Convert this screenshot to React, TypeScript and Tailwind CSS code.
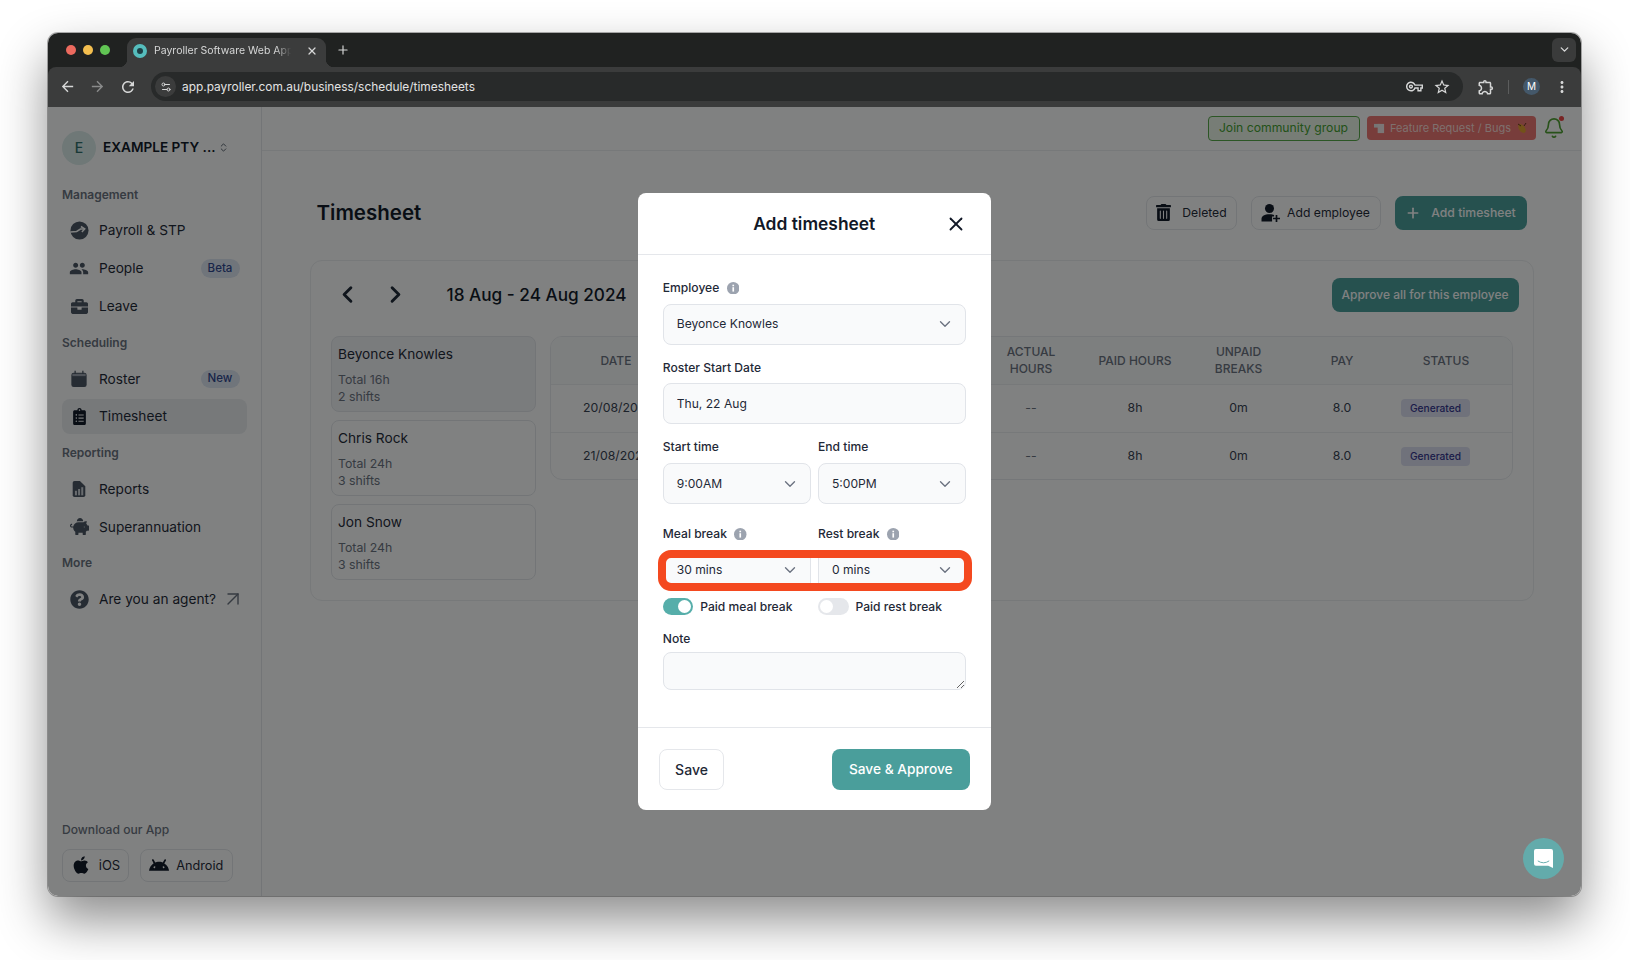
import { ReactNode } from "react";
import {
  ArrowUpRight,
  ChevronDown,
  ChevronLeft,
  ChevronRight,
  ChevronsUpDown,
  Plus,
  Settings2,
  X,
  Bell,
} from "lucide-react";
import {
  MdArrowBack,
  MdArrowForward,
  MdMoreVert,
  MdOutlineExtension,
  MdOutlineVpnKey,
  MdPeople,
  MdRefresh,
  MdStarBorder,
} from "react-icons/md";
import {
  FaApple,
  FaBriefcase,
  FaClipboardList,
  FaPiggyBank,
  FaQuestionCircle,
  FaTrashAlt,
} from "react-icons/fa";
import { SiAndroid } from "react-icons/si";

function PayrollIcon() {
  return (
    <svg viewBox="0 0 20 20" className="w-[19px] h-[19px]">
      <circle cx="10" cy="10" r="9.5" fill="#4b5563" />
      <path d="M0.5 11.5 L7 11 L11 8.5 L15 8.5" stroke="#fff" strokeWidth="1.6" fill="none" />
      <path d="M11.5 5.8 L15.5 8.4 L12.5 11.5" stroke="#fff" strokeWidth="1.6" fill="none" />
    </svg>
  );
}

function CalendarIcon() {
  return (
    <svg viewBox="0 0 20 20" className="w-[18px] h-[18px]">
      <rect x="1.5" y="3" width="17" height="16" rx="2.5" fill="#4b5563" />
      <rect x="2.6" y="4.2" width="14.8" height="2.6" fill="#9ca3af" />
      <rect x="5" y="0.8" width="1.4" height="3.6" fill="#4b5563" />
      <rect x="13.6" y="0.8" width="1.4" height="3.6" fill="#4b5563" />
    </svg>
  );
}

function ReportIcon() {
  return (
    <svg viewBox="0 0 20 20" className="w-[18px] h-[18px]">
      <path d="M3 3 a2 2 0 0 1 2-2 h6 l6 6 v10 a2 2 0 0 1-2 2 h-10 a2 2 0 0 1-2-2z" fill="#4b5563" />
      <rect x="5.5" y="12" width="2.2" height="5" fill="#d1d5db" />
      <rect x="9" y="10" width="2.2" height="7" fill="#d1d5db" />
      <rect x="12.5" y="8" width="2.2" height="9" fill="#d1d5db" />
    </svg>
  );
}

function AddPersonIcon() {
  return (
    <svg viewBox="0 0 20 20" className="w-[20px] h-[20px]">
      <circle cx="8.5" cy="5.5" r="4.5" fill="#111827" />
      <path d="M0.5 18.5 v-2.5 c0-3 3-4.8 8-4.8 c2 0 3.4 0.3 4.6 0.8 v1.5 h-2 v5z" fill="#111827" />
      <path d="M15.5 12 v7 M12 15.5 h7" stroke="#111827" strokeWidth="1.7" />
    </svg>
  );
}

function InfoDot() {
  return (
    <svg viewBox="0 0 12 12" className="w-[12.5px] h-[12.5px]">
      <circle cx="6" cy="6" r="6" fill="#9ca3af" />
      <rect x="5.2" y="5" width="1.6" height="4.2" fill="#fff" />
      <rect x="5.2" y="2.6" width="1.6" height="1.5" fill="#fff" />
    </svg>
  );
}

function NavRow({
  icon,
  label,
  badge,
  active,
  trailing,
}: {
  icon: ReactNode;
  label: string;
  badge?: string;
  active?: boolean;
  trailing?: ReactNode;
}) {
  return (
    <div
      className={`h-[34.5px] flex items-center pl-[7px] pr-[7px] rounded-lg ${active ? "bg-[#eceef1]" : ""}`}
    >
      <span className="w-[20px] flex justify-center text-[#4b5563]">{icon}</span>
      <span className="ml-[10px] text-[13.7px] text-[#1f2937] flex-1 whitespace-nowrap">{label}</span>
      {badge && (
        <span className="h-[18.5px] w-[39px] rounded-full bg-[#dfe6f3] text-[#2f468f] text-[11.5px] font-medium flex items-center justify-center">
          {badge}
        </span>
      )}
      {trailing}
    </div>
  );
}

function SectionLabel({ children }: { children: string }) {
  return (
    <div className="h-[38px] flex items-center text-[12px] font-semibold text-[#6b7280]">{children}</div>
  );
}

function Sidebar() {
  return (
    <aside className="w-[214px] shrink-0 border-r border-[#e5e7eb] pl-[14.5px] pr-[14px] pt-[24px] pb-[14px] flex flex-col">
      <div className="flex items-center h-[34px] mb-[11px]">
        <span className="w-[34px] h-[34px] rounded-full bg-[#dcecea] text-[#2f6f6b] text-[14px] font-medium flex items-center justify-center">
          E
        </span>
        <span className="ml-[7px] text-[13.6px] font-semibold text-[#111827] whitespace-nowrap">EXAMPLE PTY ...</span>
        <ChevronsUpDown size={11} className="ml-[2px] text-[#4b5563]" />
      </div>
      <SectionLabel>Management</SectionLabel>
      <div className="flex flex-col gap-[3.3px]">
        <NavRow icon={<PayrollIcon />} label="Payroll & STP" />
        <NavRow icon={<MdPeople size={23} />} label="People" badge="Beta" />
        <NavRow icon={<FaBriefcase size={17} />} label="Leave" />
      </div>
      <SectionLabel>Scheduling</SectionLabel>
      <div className="flex flex-col gap-[3.3px]">
        <NavRow icon={<CalendarIcon />} label="Roster" badge="New" />
        <NavRow icon={<FaClipboardList size={17} className="text-[#111827]" />} label="Timesheet" active />
      </div>
      <SectionLabel>Reporting</SectionLabel>
      <div className="flex flex-col gap-[3.3px]">
        <NavRow icon={<ReportIcon />} label="Reports" />
        <NavRow icon={<FaPiggyBank size={19} />} label="Superannuation" />
      </div>
      <SectionLabel>More</SectionLabel>
      <NavRow
        icon={<FaQuestionCircle size={19} />}
        label="Are you an agent?"
        trailing={<ArrowUpRight size={24} strokeWidth={1.4} className="text-[#6b7280] -mr-[5px]" />}
      />
      <div className="mt-auto">
        <div className="text-[12.1px] text-[#6b7280] font-medium mb-[9px]">Download our App</div>
        <div className="flex gap-[11px]">
          <button className="h-[33.5px] w-[67px] border border-[#e5e7eb] rounded-lg flex items-center justify-center gap-[8px] text-[13px] text-[#1f2937]">
            <FaApple size={20} className="text-[#111827]" />
            iOS
          </button>
          <button className="h-[33.5px] w-[92.5px] border border-[#e5e7eb] rounded-lg flex items-center justify-center gap-[7px] text-[12.7px] text-[#1f2937]">
            <SiAndroid size={20} className="text-[#111827]" />
            Android
          </button>
        </div>
      </div>
    </aside>
  );
}

function TopBar() {
  return (
    <div className="h-[44.5px] border-b border-[#edeef0] flex items-center justify-end pr-[16.5px] gap-[7px]">
      <button className="h-[25px] w-[152px] rounded border border-[#57a847] bg-[#ecf7e9] text-[#45a02f] text-[12.2px]">
        Join community group
      </button>
      <button className="h-[24px] w-[169px] rounded bg-[#ee7672] text-[#fbdcd8] text-[11px] flex items-center justify-center gap-[5px]">
        <svg viewBox="0 0 12 12" className="w-[11px] h-[11px]">
          <rect x="0" y="1" width="7" height="4" fill="#e8e8e8" />
          <rect x="4" y="1" width="7" height="10" fill="#f5e9e8" />
        </svg>
        Feature Request / Bugs
        <svg viewBox="0 0 12 12" className="w-[12px] h-[12px]">
          <ellipse cx="6" cy="6.5" rx="3" ry="5" fill="#e3a12f" transform="rotate(-35 6 6.5)" />
          <path d="M2 2 L5 4 M10 1 L8 4" stroke="#6b3a1a" strokeWidth="1" />
        </svg>
      </button>
      <span className="relative w-[22px] flex justify-center">
        <Bell size={22} strokeWidth={1.8} className="text-[#4fa030]" />
        <span className="absolute top-[-1px] right-[1px] w-[5px] h-[5px] rounded-full bg-[#ef4444]" />
      </span>
    </div>
  );
}

const employees = [
  { name: "Beyonce Knowles", total: "Total 16h", shifts: "2 shifts", selected: true },
  { name: "Chris Rock", total: "Total 24h", shifts: "3 shifts" },
  { name: "Jon Snow", total: "Total 24h", shifts: "3 shifts" },
];

const rows = ["20/08/2024", "21/08/2024"];
const tableCols = "grid grid-cols-[130px_298px_104px_104px_103px_104px_104px_1fr] items-center";

function TimesheetCard() {
  return (
    <div className="ml-[48px] mr-[47px] mt-[30.5px] h-[341px] rounded-xl border border-[#eceef0] pl-[20.5px] pt-[16.5px] pr-[14.5px]">
      <div className="flex items-center h-[34.5px]">
        <ChevronLeft size={27} strokeWidth={2.6} className="ml-[3px] text-[#1f2937]" />
        <ChevronRight size={27} strokeWidth={2.6} className="ml-[21px] text-[#1f2937]" />
        <span className="ml-[37.5px] text-[17.2px] font-medium text-[#111827] whitespace-nowrap">18 Aug - 24 Aug 2024</span>
        <button className="ml-auto h-[34.5px] w-[187px] rounded-lg bg-[#4a9e9b] text-white text-[12px] font-medium">
          Approve all for this employee
        </button>
      </div>
      <div className="flex mt-[23.5px] gap-[14px]">
        <div className="w-[205px] flex flex-col gap-[8px]">
          {employees.map((e) => (
            <div
              key={e.name}
              className={`h-[76.2px] rounded-lg border border-[#e5e7eb] px-[6px] pt-[7px] ${e.selected ? "bg-[#f3f4f6]" : ""}`}
            >
              <div className="text-[13.7px] text-[#1f2937] leading-[20px]">{e.name}</div>
              <div className="mt-[7px] text-[12.3px] text-[#6b7280] leading-[17px]">{e.total}</div>
              <div className="text-[12.3px] text-[#6b7280] leading-[17px]">{e.shifts}</div>
            </div>
          ))}
        </div>
        <div className="w-[963px] h-[144.5px] rounded-xl border border-[#e9ebee] text-[12.3px] text-center overflow-hidden">
          <div className={`${tableCols} h-[48px] bg-[#f9fafb] border-b border-[#eceef0] text-[#6b7280] font-medium leading-[17px] text-[12px]`}>
            <span>DATE</span>
            <span />
            <span>
              ACTUAL
              <br />
              HOURS
            </span>
            <span>PAID HOURS</span>
            <span>
              UNPAID
              <br />
              BREAKS
            </span>
            <span>PAY</span>
            <span>STATUS</span>
          </div>
          {rows.map((d, i) => (
            <div key={d} className={`${tableCols} h-[48px] text-[#374151] ${i === 0 ? "border-b border-[#eceef0]" : ""}`}>
              <span className="text-left pl-[32px]">{d}</span>
              <span />
              <span className="text-[#6b7280]">--</span>
              <span>8h</span>
              <span>0m</span>
              <span>8.0</span>
              <span className="text-left pl-[7px]">
                <span className="inline-flex items-center justify-center h-[18.5px] w-[69px] rounded bg-[#dfe1f2] text-[#34348f] text-[10.2px] font-medium">
                  Generated
                </span>
              </span>
              <span />
            </div>
          ))}
        </div>
      </div>
    </div>
  );
}

function PageBody() {
  return (
    <main className="flex-1 min-w-0">
      <TopBar />
      <div className="pl-[55px] pr-[54.5px] pt-[45px] flex items-center">
        <h1 className="text-[20.5px] font-semibold text-[#111827] pt-[1px]">Timesheet</h1>
        <div className="ml-auto flex gap-[14px] h-[33.5px] text-[12.2px] text-[#1f2937]">
          <button className="w-[91px] border border-[#e5e7eb] rounded-lg flex items-center justify-center gap-[10px]">
            <FaTrashAlt size={17} className="text-[#111827]" />
            Deleted
          </button>
          <button className="w-[130px] border border-[#e5e7eb] rounded-lg flex items-center justify-center gap-[6px]">
            <AddPersonIcon />
            Add employee
          </button>
          <button className="w-[132px] bg-[#4a9e9b] rounded-lg flex items-center justify-center gap-[10px] text-white font-medium">
            <Plus size={16} strokeWidth={2.5} />
            Add timesheet
          </button>
        </div>
      </div>
      <TimesheetCard />
    </main>
  );
}

function Label({ children, info, gap = "mb-[8px]" }: { children: string; info?: boolean; gap?: string }) {
  return (
    <div className={`h-[16px] flex items-center gap-[7.5px] text-[12.1px] font-medium text-[#1f2937] ${gap}`}>
      {children}
      {info && <InfoDot />}
    </div>
  );
}

const fieldBox = "h-[41px] w-full rounded-lg border border-[#e1e4e9] bg-[#f9fafb] text-[12.1px] text-[#1f2937]";

function SelectBox({ value }: { value: string }) {
  return (
    <div className={`${fieldBox} flex items-center justify-between pl-[13px] pr-[10.5px]`}>
      {value}
      <ChevronDown size={18} strokeWidth={1.8} className="text-[#6b7280]" />
    </div>
  );
}

function Toggle({ on, label }: { on?: boolean; label: string }) {
  return (
    <div className="flex items-center gap-[7px] text-[12.1px] font-medium text-[#1f2937]">
      <span
        className={`w-[30.5px] h-[17px] rounded-full flex items-center px-[2px] ${on ? "bg-[#56aeaa] justify-end" : "bg-[#e5e7eb]"}`}
      >
        <span className="w-[13px] h-[13px] rounded-full bg-white" />
      </span>
      {label}
    </div>
  );
}

function AddTimesheetModal() {
  return (
    <div className="w-[353px] h-[617px] bg-white rounded-lg flex flex-col">
      <div className="h-[62px] shrink-0 border-b border-[#e5e7eb] relative flex items-center justify-center">
        <h2 className="text-[17.4px] font-semibold text-[#111827] pt-[1px]">Add timesheet</h2>
        <X size={22} strokeWidth={2} className="absolute right-[23.5px] top-[20px] text-[#111827]" />
      </div>
      <div className="flex-1 px-[25px] pt-[25px]">
        <Label info>Employee</Label>
        <SelectBox value="Beyonce Knowles" />
        <div className="mt-[15px]">
          <Label gap="mb-[7px]">Roster Start Date</Label>
          <input readOnly value="Thu, 22 Aug" className={`${fieldBox} pl-[13px] outline-none`} />
        </div>
        <div className="mt-[15.5px] grid grid-cols-2 gap-x-[7.5px]">
          <div>
            <Label>Start time</Label>
            <SelectBox value="9:00AM" />
          </div>
          <div>
            <Label>End time</Label>
            <SelectBox value="5:00PM" />
          </div>
        </div>
        <div className="mt-[21.5px] grid grid-cols-2 gap-x-[7.5px]">
          <Label info>Meal break</Label>
          <Label info>Rest break</Label>
        </div>
        <div className="relative grid grid-cols-2 gap-x-[7.5px]">
          <SelectBox value="30 mins" />
          <SelectBox value="0 mins" />
          <div className="absolute left-[-5px] right-[-6px] top-0 bottom-0 border-[8px] border-[#f4491f] rounded-[13px]" />
        </div>
        <div className="mt-[7px] grid grid-cols-2 gap-x-[7.5px]">
          <Toggle on label="Paid meal break" />
          <Toggle label="Paid rest break" />
        </div>
        <div className="mt-[15px]">
          <Label gap="mb-[5px]">Note</Label>
          <textarea readOnly className="block h-[38px] w-full rounded-lg border border-[#e1e4e9] bg-[#f9fafb] outline-none" />
        </div>
      </div>
      <div className="h-[83px] shrink-0 border-t border-[#e5e7eb] px-[21px] pt-[1px] flex items-center justify-between">
        <button className="h-[41px] w-[65.5px] rounded-lg border border-[#e5e7eb] text-[14px] font-medium text-[#1f2937]">
          Save
        </button>
        <button className="h-[41px] w-[138px] rounded-lg bg-[#4a9e9b] text-[13.7px] font-medium text-white">
          Save &amp; Approve
        </button>
      </div>
    </div>
  );
}

function BrowserChrome() {
  return (
    <header className="shrink-0 bg-[#202221] text-[#d6d7d7]">
      <div className="h-[34px] flex items-start pt-[5px]">
        <div className="flex items-center gap-[6.5px] ml-[18px] mt-[7px]">
          <span className="w-[10.5px] h-[10.5px] rounded-full bg-[#ec6a5e]" />
          <span className="w-[10.5px] h-[10.5px] rounded-full bg-[#f4bf4f]" />
          <span className="w-[10.5px] h-[10.5px] rounded-full bg-[#61c554]" />
        </div>
        <div className="relative ml-[16.5px] h-[29px] w-[199px] rounded-t-[9px] bg-[#3b3c3c] flex items-center pl-[6.5px] pb-[2px] before:absolute before:bottom-0 before:left-[-8px] before:w-2 before:h-2 before:bg-[radial-gradient(circle_at_0_0,transparent_8px,#3b3c3c_8.5px)] after:absolute after:bottom-0 after:right-[-8px] after:w-2 after:h-2 after:bg-[radial-gradient(circle_at_100%_0,transparent_8px,#3b3c3c_8.5px)]">
          <span className="shrink-0 w-[14px] h-[14px] rounded-full border-[4px] border-[#55bdbd] bg-[#1d3f45]" />
          <span className="ml-[7px] w-[143px] whitespace-nowrap text-[10.5px] [mask-image:linear-gradient(90deg,#000_85%,transparent_96%)]">
            Payroller Software Web Appli
          </span>
          <X size={12} strokeWidth={2.5} className="ml-[9px]" />
        </div>
        <Plus size={14} className="ml-[10px] mt-[5px]" />
        <span className="ml-auto mr-[5px] w-[24px] h-[24px] rounded-md bg-[#3a3b3b] flex items-center justify-center">
          <ChevronDown size={13} strokeWidth={2.5} />
        </span>
      </div>
      <div className="h-[40px] bg-[#3b3c3c] rounded-t-[8px] flex items-center pl-[4.5px]">
        <span className="w-[30px] flex justify-center"><MdArrowBack size={17} /></span>
        <span className="w-[30px] flex justify-center text-[#8a8b8b]"><MdArrowForward size={17} /></span>
        <span className="w-[31px] flex justify-center"><MdRefresh size={18} /></span>
        <div className="ml-[8px] h-[29px] w-[1312px] rounded-full bg-[#282a2a] flex items-center pl-[4px] pr-[12px]">
          <span className="w-[21px] h-[21px] rounded-full bg-[#3b3c3c] flex items-center justify-center">
            <Settings2 size={12} />
          </span>
          <span className="ml-[6px] text-[11.9px] text-[#e3e3e3]">app.payroller.com.au/business/schedule/timesheets</span>
          <MdOutlineVpnKey size={17} className="ml-auto" />
          <MdStarBorder size={18} className="ml-[10px]" />
        </div>
        <MdOutlineExtension size={18} className="ml-[14px]" />
        <span className="ml-[13px] w-px h-[14px] bg-[#5c5d5d]" />
        <span className="ml-[14px] w-[17px] h-[17px] rounded-full bg-[#44586a] text-[10px] text-white flex items-center justify-center">
          M
        </span>
        <MdMoreVert size={18} className="ml-[13px]" />
      </div>
    </header>
  );
}

function ChatBubble() {
  return (
    <div className="absolute right-[17.5px] bottom-[17px] w-[41px] h-[41px] rounded-full bg-[#63abab] flex items-center justify-center">
      <svg viewBox="0 0 20 20" className="w-[19px] h-[21px]">
        <path d="M2 0 H18 a2 2 0 0 1 2 2 V20 L15 17.5 H2 a2 2 0 0 1-2-2 V2 a2 2 0 0 1 2-2z" fill="#fff" />
        <path d="M4 12.5 Q10 16.5 16 12.5" stroke="#63abab" strokeWidth="1" fill="none" />
      </svg>
    </div>
  );
}

export default function App() {
  return (
    <div className="w-[1630px] h-[960px] bg-white pt-[32.5px] pl-[47.5px] overflow-hidden font-[Inter,sans-serif]">
      <div className="w-[1533.5px] h-[863.5px] rounded-[10px] overflow-hidden flex flex-col shadow-[0_0_0_1px_rgba(0,0,0,0.3),0_24px_50px_rgba(0,0,0,0.45)]">
        <BrowserChrome />
        <div className="relative flex-1 min-h-0 flex bg-white">
          <Sidebar />
          <PageBody />
          <div className="absolute inset-0 bg-[#010403]/50 flex items-center justify-center">
            <AddTimesheetModal />
          </div>
          <ChatBubble />
        </div>
      </div>
    </div>
  );
}
